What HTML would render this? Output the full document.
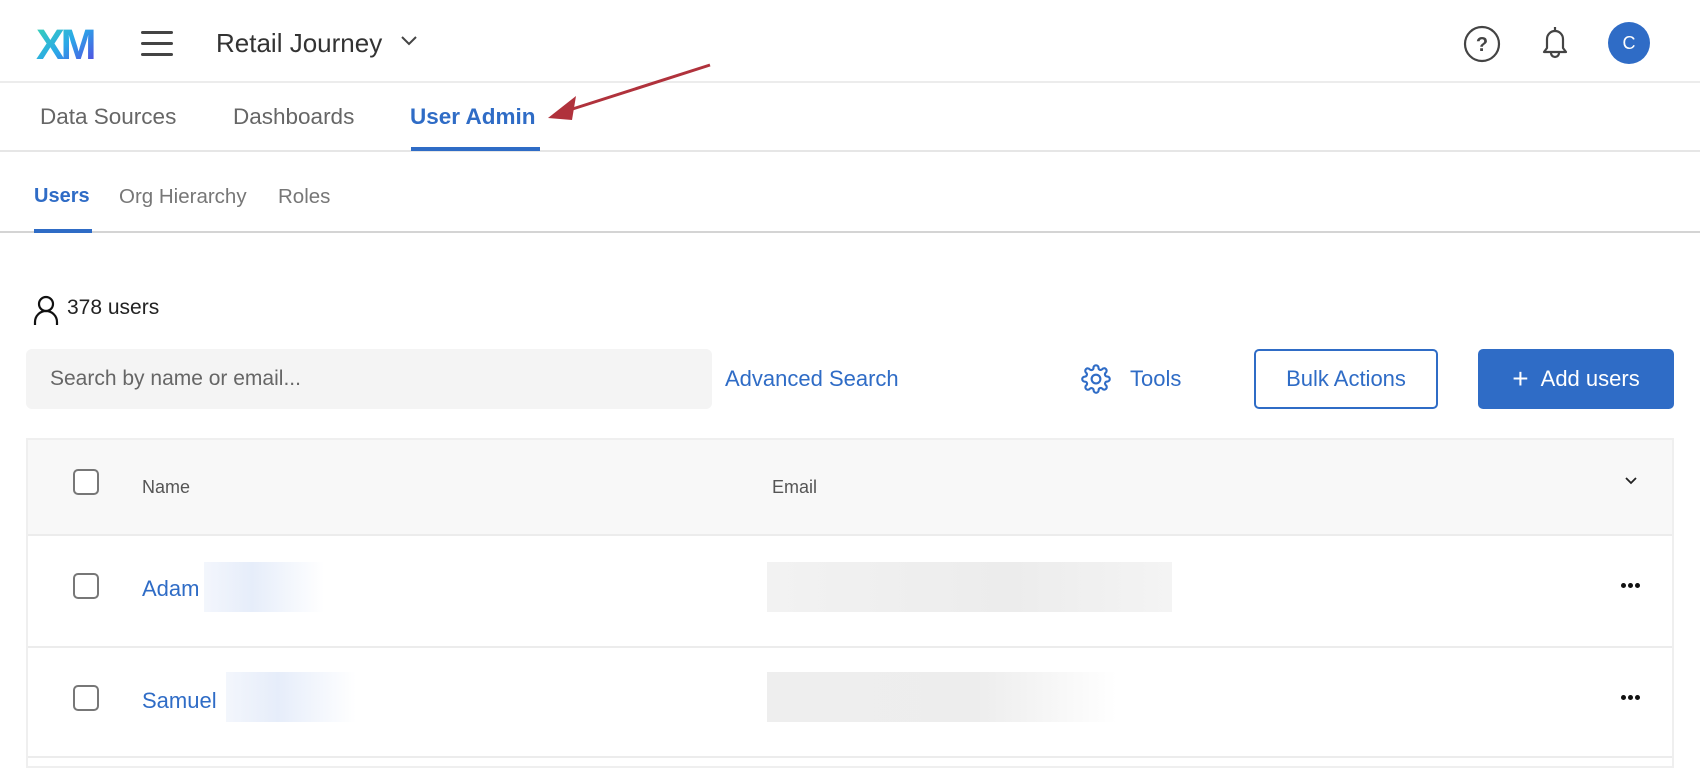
<!DOCTYPE html>
<html><head><meta charset="utf-8"><style>
*{margin:0;padding:0;box-sizing:border-box}
body{width:1700px;height:760px;background:#fff;font-family:"Liberation Sans",sans-serif;position:relative;overflow:hidden;color:#333}
.a{position:absolute;white-space:nowrap}
.blue{color:#2f6cc6}
.dot{position:absolute;width:5px;height:5px;border-radius:50%;background:#111}
</style></head><body>
<!-- header -->
<svg class="a" style="left:36px;top:25px" width="70" height="38" viewBox="0 0 70 38">
<defs><linearGradient id="g" x1="0" y1="0" x2="1" y2="1"><stop offset="0" stop-color="#3ad8b0"/><stop offset="0.5" stop-color="#2aa8e8"/><stop offset="1" stop-color="#5a3de0"/></linearGradient></defs>
<text x="0" y="34" font-family="Liberation Sans" font-weight="bold" font-size="43" fill="url(#g)" letter-spacing="-4">XM</text>
</svg>
<div class="a" style="left:141px;top:31px;width:32px;height:3px;background:#444;border-radius:2px"></div>
<div class="a" style="left:141px;top:42px;width:32px;height:3px;background:#444;border-radius:2px"></div>
<div class="a" style="left:141px;top:53px;width:32px;height:3px;background:#444;border-radius:2px"></div>
<div class="a" style="left:216px;top:28px;font-size:26px;color:#333">Retail Journey</div>
<svg class="a" style="left:400px;top:35px" width="18" height="12"><path d="M2 2l7 7 7-7" stroke="#444" stroke-width="2" fill="none"/></svg>
<svg class="a" style="left:1463px;top:25px" width="38" height="38"><circle cx="19" cy="19" r="17" stroke="#444" stroke-width="2.2" fill="none"/><text x="19" y="26" text-anchor="middle" font-size="20" font-weight="bold" fill="#444" font-family="Liberation Sans">?</text></svg>
<svg class="a" style="left:1540px;top:24px" width="30" height="38"><path d="M4 28h22l-3-4v-9a8 8 0 0 0-16 0v9z" stroke="#444" stroke-width="2.2" fill="none" stroke-linejoin="round"/><path d="M15 3v4M11 29a4 4 0 0 0 8 0" stroke="#444" stroke-width="2.2" fill="none"/></svg>
<div class="a" style="left:1608px;top:22px;width:42px;height:42px;border-radius:50%;background:#2f6cc6;color:#fff;font-size:18px;text-align:center;line-height:42px">C</div>
<div class="a" style="left:0;top:81px;width:1700px;height:2px;background:#ececec"></div>
<!-- tabs -->
<div class="a" style="left:40px;top:104px;font-size:22.5px;color:#666">Data Sources</div>
<div class="a" style="left:233px;top:104px;font-size:22.5px;color:#666">Dashboards</div>
<div class="a blue" style="left:410px;top:104px;font-size:22.5px;font-weight:bold">User Admin</div>
<div class="a" style="left:0;top:150px;width:1700px;height:2px;background:#e6e6e6"></div>
<div class="a" style="left:411px;top:147px;width:129px;height:4px;background:#2f6cc6"></div>
<svg class="a" style="left:540px;top:58px" width="180" height="70"><path d="M170 7L20 55" stroke="#b0323c" stroke-width="3"/><path d="M8 60L36 38L32 62Z" fill="#b0323c"/></svg>
<!-- subtabs -->
<div class="a blue" style="left:34px;top:185px;font-size:20px;font-weight:bold">Users</div>
<div class="a" style="left:119px;top:185px;font-size:20.5px;color:#777">Org Hierarchy</div>
<div class="a" style="left:278px;top:185px;font-size:20.5px;color:#777">Roles</div>
<div class="a" style="left:0;top:231px;width:1700px;height:2px;background:#d4d4d4"></div>
<div class="a" style="left:34px;top:229px;width:58px;height:4px;background:#2f6cc6"></div>
<!-- count -->
<svg class="a" style="left:32px;top:294px" width="30" height="32"><circle cx="14" cy="10" r="7" stroke="#111" stroke-width="2.2" fill="none"/><path d="M3 31v-3a11 11 0 0 1 22 0v3" stroke="#111" stroke-width="2.2" fill="none"/></svg>
<div class="a" style="left:67px;top:296px;font-size:21px;color:#222">378 users</div>
<!-- toolbar -->
<div class="a" style="left:26px;top:349px;width:686px;height:60px;background:#f4f4f4;border-radius:6px"></div>
<div class="a" style="left:50px;top:367px;font-size:21px;color:#666">Search by name or email...</div>
<div class="a blue" style="left:725px;top:366px;font-size:22px">Advanced Search</div>
<svg class="a" style="left:1081px;top:364px" width="30" height="30" viewBox="0 0 24 24"><path d="M12 15.5a3.5 3.5 0 1 0 0-7 3.5 3.5 0 0 0 0 7z" stroke="#2f6cc6" stroke-width="1.7" fill="none"/><path d="M19.4 15a1.7 1.7 0 0 0 .3 1.8l.1.1a2 2 0 1 1-2.8 2.8l-.1-.1a1.7 1.7 0 0 0-1.8-.3 1.7 1.7 0 0 0-1 1.5V21a2 2 0 1 1-4 0v-.1a1.7 1.7 0 0 0-1.1-1.5 1.7 1.7 0 0 0-1.8.3l-.1.1a2 2 0 1 1-2.8-2.8l.1-.1a1.7 1.7 0 0 0 .3-1.8 1.7 1.7 0 0 0-1.5-1H3a2 2 0 1 1 0-4h.1a1.7 1.7 0 0 0 1.5-1.1 1.7 1.7 0 0 0-.3-1.8l-.1-.1a2 2 0 1 1 2.8-2.8l.1.1a1.7 1.7 0 0 0 1.8.3H9a1.7 1.7 0 0 0 1-1.5V3a2 2 0 1 1 4 0v.1a1.7 1.7 0 0 0 1 1.5 1.7 1.7 0 0 0 1.8-.3l.1-.1a2 2 0 1 1 2.8 2.8l-.1.1a1.7 1.7 0 0 0-.3 1.8V9a1.7 1.7 0 0 0 1.5 1H21a2 2 0 1 1 0 4h-.1a1.7 1.7 0 0 0-1.5 1z" stroke="#2f6cc6" stroke-width="1.7" fill="none"/></svg>
<div class="a blue" style="left:1130px;top:366px;font-size:22px">Tools</div>
<div class="a blue" style="left:1254px;top:349px;width:184px;height:60px;border:2px solid #2f6cc6;border-radius:5px;text-align:center;line-height:56px;font-size:22px">Bulk Actions</div>
<div class="a" style="left:1478px;top:349px;width:196px;height:60px;background:#2f6cc6;border-radius:5px;color:#fff;text-align:center;line-height:60px;font-size:22px"><span style="font-size:28px;font-weight:300;vertical-align:-2px;margin-right:12px">+</span>Add users</div>
<!-- table -->
<div class="a" style="left:26px;top:438px;width:1648px;height:330px;border:2px solid #efefef"></div>
<div class="a" style="left:28px;top:440px;width:1644px;height:96px;background:#f8f8f8;border-bottom:2px solid #ececec"></div>
<div class="a" style="left:28px;top:646px;width:1644px;height:2px;background:#ececec"></div>
<div class="a" style="left:28px;top:756px;width:1644px;height:2px;background:#ececec"></div>
<div class="a" style="left:73px;top:469px;width:26px;height:26px;border:2px solid #777;border-radius:5px;background:#fff"></div>
<div class="a" style="left:73px;top:573px;width:26px;height:26px;border:2px solid #777;border-radius:5px"></div>
<div class="a" style="left:73px;top:685px;width:26px;height:26px;border:2px solid #777;border-radius:5px"></div>
<div class="a" style="left:142px;top:477px;font-size:18px;color:#555">Name</div>
<div class="a" style="left:772px;top:477px;font-size:18px;color:#555">Email</div>
<svg class="a" style="left:1624px;top:476px" width="14" height="10"><path d="M2 2l5 5 5-5" stroke="#222" stroke-width="1.8" fill="none"/></svg>
<div class="a blue" style="left:142px;top:576px;font-size:22px">Adam</div>
<div class="a" style="left:204px;top:562px;width:120px;height:50px;background:linear-gradient(90deg,#f3f6fc,#e6edfa 40%,#fff)"></div>
<div class="a" style="left:767px;top:562px;width:405px;height:50px;background:linear-gradient(90deg,#f2f2f2,#ececec 60%,#f4f4f4)"></div>
<div class="a blue" style="left:142px;top:688px;font-size:22px">Samuel</div>
<div class="a" style="left:226px;top:672px;width:130px;height:50px;background:linear-gradient(90deg,#f3f6fc,#e6edfa 40%,#fff)"></div>
<div class="a" style="left:767px;top:672px;width:350px;height:50px;background:linear-gradient(90deg,#eeeeee,#ededed 60%,#fff)"></div>
<div class="dot" style="left:1621px;top:583px"></div><div class="dot" style="left:1628px;top:583px"></div><div class="dot" style="left:1635px;top:583px"></div>
<div class="dot" style="left:1621px;top:695px"></div><div class="dot" style="left:1628px;top:695px"></div><div class="dot" style="left:1635px;top:695px"></div>
</body></html>
